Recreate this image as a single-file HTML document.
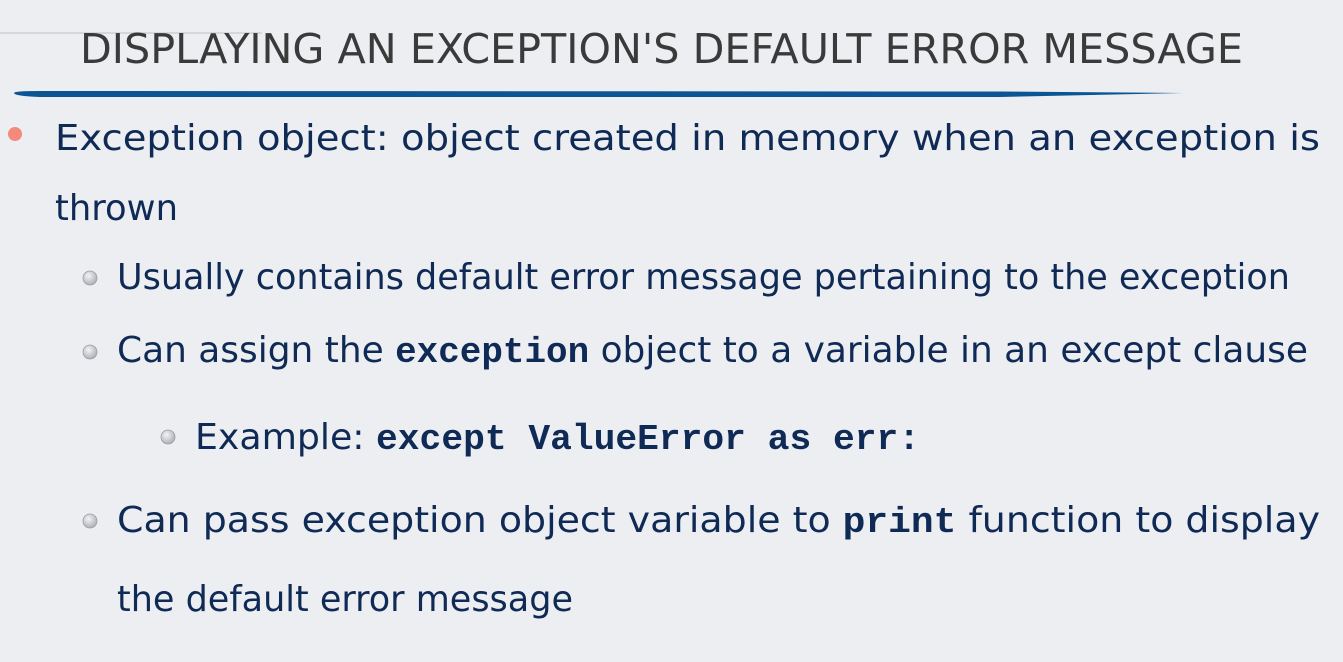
<!DOCTYPE html>
<html><head><meta charset="utf-8"><style>
html,body{margin:0;padding:0;background:#edeef2;}
svg{display:block}
</style></head><body>
<svg width="1343" height="662" viewBox="0 0 1343 662" xmlns="http://www.w3.org/2000/svg">
<rect width="1343" height="662" fill="#edeef2"/>
<line x1="0" y1="33" x2="262" y2="33" stroke="#d6d7db" stroke-width="2"/>
<path d="M14 93 Q14 91 40 91 L1000 91.5 L1183 93 L1000 97 L40 97 Q14 96 14 93 Z" fill="#0b5595"/>
<text x="80" y="63" font-family="DejaVu Sans, sans-serif" font-size="41" fill="#3a3a3a" textLength="1163" lengthAdjust="spacingAndGlyphs">DISPLAYING AN EXCEPTION'S DEFAULT ERROR MESSAGE</text>
<circle cx="15" cy="134" r="7" fill="#f48a7c"/>
<g font-family="DejaVu Sans, sans-serif" fill="#0f2a55" font-size="36">
<text x="55" y="150" textLength="1265" lengthAdjust="spacingAndGlyphs">Exception object: object created in memory when an exception is</text>
<text x="55" y="220" textLength="123" lengthAdjust="spacingAndGlyphs">thrown</text>
<text x="117" y="289" textLength="1173" lengthAdjust="spacingAndGlyphs">Usually contains default error message pertaining to the exception</text>
<text x="117" y="362" textLength="1191" lengthAdjust="spacingAndGlyphs">Can assign the <tspan font-family="Liberation Mono, monospace" font-weight="bold">exception</tspan> object to a variable in an except clause</text>
<text x="195" y="449" textLength="725" lengthAdjust="spacingAndGlyphs">Example: <tspan font-family="Liberation Mono, monospace" font-weight="bold">except ValueError as err:</tspan></text>
<text x="117" y="532" textLength="1203" lengthAdjust="spacingAndGlyphs">Can pass exception object variable to <tspan font-family="Liberation Mono, monospace" font-weight="bold">print</tspan> function to display</text>
<text x="117" y="611" textLength="456" lengthAdjust="spacingAndGlyphs">the default error message</text>
</g>
<defs><radialGradient id="b" cx="0.4" cy="0.35" r="0.7"><stop offset="0" stop-color="#f4f4f6"/><stop offset="1" stop-color="#a8abb2"/></radialGradient></defs>
<g fill="url(#b)" stroke="#9a9da4" stroke-width="0.8">
<circle cx="90" cy="278" r="7"/>
<circle cx="90" cy="352" r="7"/>
<circle cx="168" cy="437" r="7"/>
<circle cx="90" cy="521" r="7"/>
</g>
</svg>
</body></html>
